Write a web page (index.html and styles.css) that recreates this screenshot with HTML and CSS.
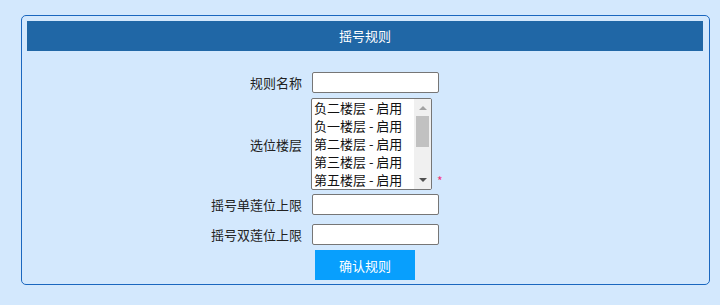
FILE: index.html
```html
<!DOCTYPE html>
<html>
    <head>
        <title>摇号规则</title>
        <meta charset="utf-8">
        <link rel="stylesheet" href="styles.css">
    </head>
    <body>
        <div class="panel">
            <div class="panel-title">摇号规则</div>
            <div class="form">
                <div class="row row-name">
                    <label class="label">规则名称</label>
                    <input class="field" type="text">
                </div>
                <div class="row row-floor">
                    <label class="label">选位楼层</label>
                    <div class="floors">
                        <ul class="floor-list">
                            <li>负二楼层 - 启用</li>
                            <li>负一楼层 - 启用</li>
                            <li>第二楼层 - 启用</li>
                            <li>第三楼层 - 启用</li>
                            <li>第五楼层 - 启用</li>
                        </ul>
                        <div class="scrollbar">
                            <span class="arrow up"></span>
                            <span class="thumb"></span>
                            <span class="arrow down"></span>
                        </div>
                    </div>
                    <span class="required">*</span>
                </div>
                <div class="row row-single">
                    <label class="label">摇号单莲位上限</label>
                    <input class="field" type="text">
                </div>
                <div class="row row-double">
                    <label class="label">摇号双莲位上限</label>
                    <input class="field" type="text">
                </div>
                <div class="row">
                    <span class="label"></span>
                    <button class="submit">确认规则</button>
                </div>
            </div>
        </div>
    </body>
</html>
```

FILE: styles.css
```css
body
{
    margin:0;
    background:#d3e8fd;
    font-family:"Noto Sans CJK SC","Microsoft YaHei",sans-serif;
    font-size:13px;
    color:#222;
}
.panel
{
    margin:15px 10px 0 21px;
    border:1px solid #1a67bf;
    border-radius:5px;
    padding:5px 6px 4px 5px;
    height:259px;
}
.panel-title
{
    height:30px;
    line-height:29px;
    background:#2067a6;
    color:white;
    text-align:center;
}
.form
{
    padding-top:21px;
}
.row
{
    display:flex;
    align-items:center;
}
.label
{
    width:275px;
    margin-right:10px;
    text-align:right;
}
.field
{
    box-sizing:border-box;
    width:127px;
    height:21px;
    margin:0;
    border:1px solid #767676;
    border-radius:2px;
    background:white;
}
.row-name
{
    margin-bottom:5px;
}
.floors
{
    box-sizing:border-box;
    display:flex;
    width:121px;
    height:92px;
    margin-left:-1px;
    border:1px solid #767676;
    border-radius:2px;
    background:white;
    overflow:hidden;
}
.floor-list
{
    flex:1;
    margin:0;
    padding:0 0 0 2px;
    list-style:none;
    color:#111;
}
.floor-list li
{
    height:18px;
    line-height:18px;
    white-space:nowrap;
}
.scrollbar
{
    position:relative;
    width:17px;
    background:#f0f0f0;
}
.thumb
{
    position:absolute;
    left:2px;
    top:17px;
    width:13px;
    height:31px;
    background:#c1c1c1;
}
.arrow
{
    position:absolute;
    left:5px;
    width:0;
    height:0;
    border-left:4px solid transparent;
    border-right:4px solid transparent;
}
.arrow.up
{
    top:7px;
    border-bottom:4px solid #a3a3a3;
}
.arrow.down
{
    bottom:7px;
    border-top:4px solid #505050;
}
.required
{
    align-self:flex-end;
    margin-left:5px;
    color:#f0357a;
    font-size:12px;
    line-height:12px;
    margin-bottom:3px;
}
.row-floor
{
    margin-bottom:4px;
}
.row-single
{
    margin-bottom:9px;
}
.row-double
{
    margin-bottom:5px;
}
.submit
{
    width:100px;
    height:30px;
    margin-left:3px;
    border:none;
    background:#089ffd;
    color:white;
    font-family:inherit;
    font-size:13px;
}
```
